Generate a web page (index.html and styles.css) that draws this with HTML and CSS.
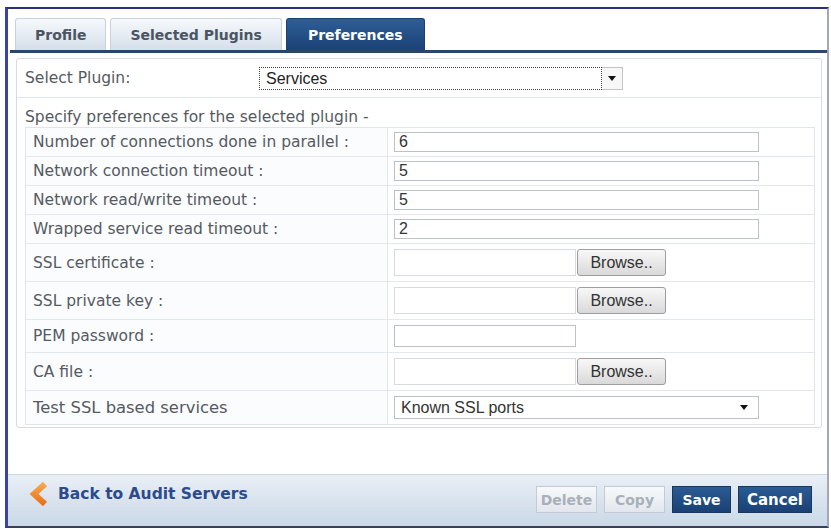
FILE: index.html
```html
<!DOCTYPE html>
<html lang="en">
<head>
  <meta charset="UTF-8">
  <title>Audit Server - Preferences</title>
  <link rel="stylesheet" href="styles.css">
</head>
<body>

<div class="window">
  <ul class="tabs">
    <li class="tab">Profile</li>
    <li class="tab">Selected Plugins</li>
    <li class="tab active">Preferences</li>
  </ul>

  <div class="panel">
    <div class="plugin-row">
      <span class="plugin-label">Select Plugin:</span>
      <div class="combo">
        <span class="combo-text">Services</span>
        <span class="combo-btn"><span class="caret"></span></span>
      </div>
    </div>

    <p class="hint">Specify preferences for the selected plugin -</p>

    <div class="prefs">
      <div class="row">
        <div class="cell-label">Number of connections done in parallel :</div>
        <div class="cell-value"><input class="text" type="text" value="6"></div>
      </div>
      <div class="row">
        <div class="cell-label">Network connection timeout :</div>
        <div class="cell-value"><input class="text" type="text" value="5"></div>
      </div>
      <div class="row">
        <div class="cell-label">Network read/write timeout :</div>
        <div class="cell-value"><input class="text" type="text" value="5"></div>
      </div>
      <div class="row">
        <div class="cell-label">Wrapped service read timeout :</div>
        <div class="cell-value"><input class="text" type="text" value="2"></div>
      </div>
      <div class="row row-file">
        <div class="cell-label">SSL certificate :</div>
        <div class="cell-value"><span class="file-box"></span><button class="browse">Browse..</button></div>
      </div>
      <div class="row row-file">
        <div class="cell-label">SSL private key :</div>
        <div class="cell-value"><span class="file-box"></span><button class="browse">Browse..</button></div>
      </div>
      <div class="row row-pem">
        <div class="cell-label">PEM password :</div>
        <div class="cell-value"><input class="password" type="password"></div>
      </div>
      <div class="row row-file">
        <div class="cell-label">CA file :</div>
        <div class="cell-value"><span class="file-box"></span><button class="browse">Browse..</button></div>
      </div>
      <div class="row row-last">
        <div class="cell-label big">Test SSL based services</div>
        <div class="cell-value">
          <div class="dropdown">Known SSL ports<span class="caret"></span></div>
        </div>
      </div>
    </div>
  </div>

  <div class="footer">
    <a class="back" href="#">
      <svg width="24" height="24" viewBox="0 0 24 24">
        <defs>
          <linearGradient id="chev" x1="0" y1="0" x2="0" y2="1">
            <stop offset="0" stop-color="#f7a64c"/>
            <stop offset="1" stop-color="#ea7019"/>
          </linearGradient>
        </defs>
        <path d="M17 2 L6 12 L17 22" stroke="url(#chev)" stroke-width="6" fill="none"/>
      </svg>
      Back to Audit Servers
    </a>
    <div class="actions">
      <button class="btn btn-off btn-delete">Delete</button>
      <button class="btn btn-off btn-copy">Copy</button>
      <button class="btn btn-main btn-save">Save</button>
      <button class="btn btn-main btn-cancel">Cancel</button>
    </div>
  </div>
</div>

</body>
</html>
```

FILE: styles.css
```css
body {
  margin: 0;
  font-family: "DejaVu Sans", Verdana, sans-serif;
  background: #fff;
  color: #555a61;
}

.window {
  margin: 7px 2px 1px 5px;
  height: 521px;
  box-sizing: border-box;
  border-top: 2px solid #2a2f7e;
  border-left: 3px solid #3a44a6;
  border-right: 2px solid #a3a9b3;
  border-bottom: 2px solid #3a3f55;
  padding-top: 9px;
  display: flex;
  flex-direction: column;
}

/* tab strip */
.tabs {
  display: flex;
  align-items: flex-end;
  gap: 4px;
  list-style: none;
  margin: 0 0 0 2px;
  padding: 0 0 0 5px;
  border-bottom: 3px solid #2c4669;
}

.tab {
  height: 32px;
  box-sizing: border-box;
  padding: 0 19px;
  display: flex;
  align-items: center;
  font-size: 14px;
  font-weight: bold;
  color: #4b5462;
  background: linear-gradient(#f6f9fc, #d5dfea);
  border: 1px solid #c8d2dd;
  border-bottom: none;
  border-radius: 3px 3px 0 0;
}

.tab.active {
  padding: 0 21px;
  color: #fff;
  background: linear-gradient(#2d5e96, #1b4275);
  border-color: #1b4275;
}

/* preferences panel */
.panel {
  margin: 5px 5px 0 8px;
  border: 1px solid #d5dce4;
  border-radius: 3px;
  padding-bottom: 2px;
}

.plugin-row {
  display: flex;
  align-items: center;
  height: 38px;
  padding-left: 8px;
  border-bottom: 1px solid #e1e6ec;
}

.plugin-label {
  width: 234px;
  font-size: 15.5px;
}

.combo {
  display: flex;
  width: 364px;
  height: 23px;
}

.combo-text {
  flex: 1;
  border: 1px dotted #444;
  padding: 0 6px;
  font-family: "Liberation Sans", Arial, sans-serif;
  font-size: 16px;
  line-height: 21px;
  color: #222;
}

.combo-btn {
  width: 20px;
  border: 1px solid #c4c4c4;
  border-left: none;
  background: #f7f7f7;
  display: flex;
  align-items: center;
  justify-content: center;
}

.caret {
  width: 0;
  height: 0;
  border-left: 4px solid transparent;
  border-right: 4px solid transparent;
  border-top: 5px solid #111;
}

.hint {
  margin: 0;
  padding: 9px 0 0 8px;
  height: 20px;
  line-height: 20px;
  font-size: 15.5px;
}

.prefs {
  margin: 0 6px 0 8px;
  border: 1px solid #dfe5eb;
}

.row {
  display: grid;
  grid-template-columns: 362px 1fr;
  height: 29px;
  box-sizing: border-box;
  border-bottom: 1px solid #e3e8ee;
}

.row-file { height: 38px; }
.row-pem { height: 33px; }
.row-last { height: 33px; border-bottom: none; }

.cell-label {
  display: flex;
  align-items: center;
  padding-left: 7px;
  font-size: 15.5px;
  background: #fbfcfe;
  border-right: 1px solid #e3e8ee;
}

.cell-label.big {
  font-size: 16.4px;
}

.cell-value {
  display: flex;
  align-items: center;
  padding-left: 6px;
}

.text, .password, .dropdown {
  box-sizing: border-box;
  border: 1px solid #bac1c9;
  font-family: "Liberation Sans", Arial, sans-serif;
  font-size: 16px;
  color: #333;
  background: #fff;
  margin: 0;
}

.text {
  width: 365px;
  height: 20px;
  padding: 0 4px;
}

.password {
  width: 182px;
  height: 22px;
}

.file-box {
  width: 182px;
  height: 27px;
  box-sizing: border-box;
  border: 1px solid #d7dbe0;
  background: #fff;
}

.browse {
  width: 89px;
  height: 27px;
  margin-left: 1px;
  border: 1px solid #9d9d9d;
  border-radius: 3px;
  background: linear-gradient(#f8f8f8, #d9d9d9);
  font-family: "Liberation Sans", Arial, sans-serif;
  font-size: 16px;
  color: #333;
}

.dropdown {
  width: 365px;
  height: 23px;
  padding: 0 10px 0 6px;
  display: flex;
  align-items: center;
  justify-content: space-between;
}

/* bottom bar */
.footer {
  margin-top: auto;
  height: 52px;
  box-sizing: border-box;
  display: flex;
  align-items: flex-start;
  padding: 0 15px 0 20px;
  border-top: 1px solid #cdd6e0;
  background: linear-gradient(#e9eff6, #cad8e7);
}

.back {
  display: flex;
  align-items: center;
  gap: 6px;
  margin-top: 7px;
  font-size: 15.5px;
  font-weight: bold;
  color: #2c4a8c;
  text-decoration: none;
}

.actions {
  display: flex;
  gap: 7px;
  margin-left: auto;
  margin-top: 11px;
}

.btn {
  height: 27px;
  padding: 0;
  font-family: "DejaVu Sans", Verdana, sans-serif;
  font-size: 14px;
  font-weight: bold;
}

.btn-delete, .btn-copy { width: 61px; }
.btn-save { width: 59px; }
.btn-cancel { width: 74px; font-size: 15px; }

.btn-off {
  color: #a8b0b9;
  background: linear-gradient(#f7f9fb, #e2e7ed);
  border: 1px solid #c3cad3;
}

.btn-main {
  color: #fff;
  background: linear-gradient(#2b5b93, #1a4175);
  border: 1px solid #17395f;
}
```
